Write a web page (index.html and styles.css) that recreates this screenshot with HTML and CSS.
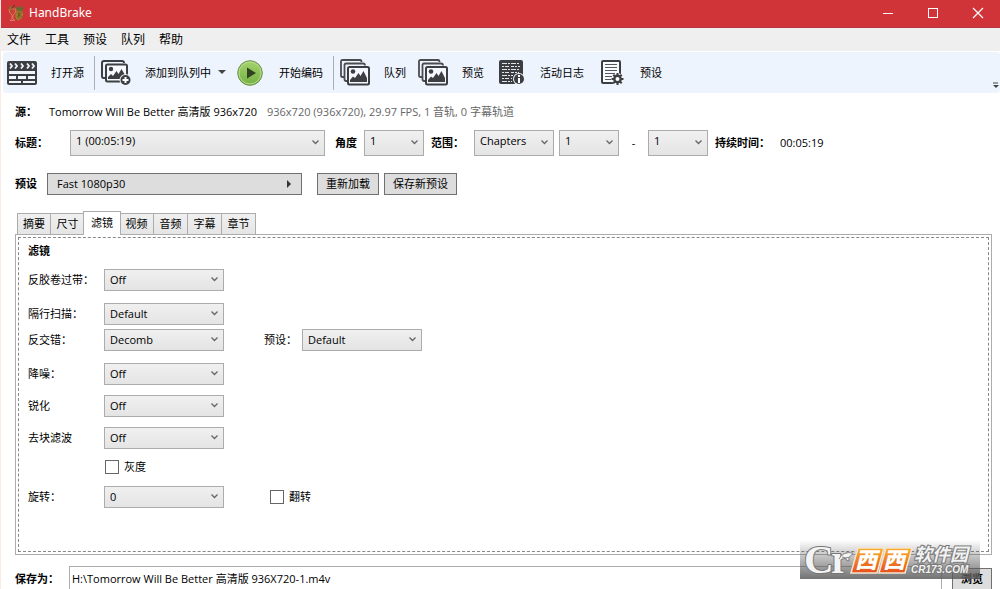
FILE: index.html
```html
<!DOCTYPE html>
<html lang="zh-CN">
<head>
<meta charset="utf-8">
<title>HandBrake</title>
<link rel="stylesheet" href="styles.css">
</head>
<body>
<svg class="defs" aria-hidden="true">
  <defs>
    <linearGradient id="green" x1="0" y1="0" x2="0" y2="1"><stop offset="0" stop-color="#a5d36e"/><stop offset="1" stop-color="#74b043"/></linearGradient>
    <linearGradient id="orange" x1="0" y1="0" x2="0" y2="1"><stop offset="0" stop-color="#f9ae2c"/><stop offset="1" stop-color="#e8501c"/></linearGradient>
    <symbol id="photos" viewBox="0 0 30 27">
      <path d="M4 18H2.500Q1 18 1 16.500V2.500Q1 1 2.500 1H20Q21.500 1 21.500 3" fill="none" stroke="#4a4c50" stroke-width="1.800"/>
      <path d="M7 22H6Q4.500 22 4.500 20V6Q4.500 4.500 6 4.500H23Q25 4.500 25 6.500" fill="none" stroke="#4a4c50" stroke-width="1.800"/>
      <rect x="8" y="8" width="21" height="17.500" rx="1.500" fill="#f5f9ff" stroke="#3c3e42" stroke-width="2"/>
      <circle cx="13" cy="12.500" r="2.300" fill="#3c3e42"/>
      <path d="M10 23V21L13 17.500 15 19 18.500 14 20.500 17 23.500 12 27 19V23Z" fill="#3c3e42"/>
    </symbol>
  </defs>
</svg>
<div class="app">
  <header class="titlebar">
    <svg class="logo" viewBox="0 0 16 16" width="16" height="16" aria-hidden="true">
      <path d="M8 7Q9 4 12 4.500Q16 6 15 11Q13 16 9 15Q6 12 8 7Z" fill="#a07c30"/>
      <path d="M9 5.500L7 1L10.500 3L12 0L13 3L16 1.500L14 6Z" fill="#59702f"/>
      <path d="M9 8L14 12M9 12L14 7M11 6V14" stroke="#6a531c" stroke-width=".8"/>
      <path d="M1 4H8Q8 9 5 10V14L7 15.500H2L4 14V10Q1 9 1 4Z" fill="#c8442f" stroke="#dc9b80" stroke-width=".6"/>
      <circle cx="3" cy="3" r="2" fill="#8b6a2a"/><path d="M4 3L7 0" stroke="#4d3b21"/>
    </svg>
    <h1 class="title">HandBrake</h1>
    <div class="winbtns">
      <button class="winbtn" aria-label="最小化"><svg width="12" height="12"><path d="M1 6.500H11" stroke="#fff"/></svg></button>
      <button class="winbtn" aria-label="最大化"><svg width="12" height="12"><rect x="1.500" y="1.500" width="9" height="9" fill="none" stroke="#fff"/></svg></button>
      <button class="winbtn" aria-label="关闭"><svg width="12" height="12"><path d="M1 1L11 11M11 1L1 11" stroke="#fff" stroke-width="1.200"/></svg></button>
    </div>
  </header>
  <nav class="menu">
    <button>文件</button><button>工具</button><button>预设</button><button>队列</button><button>帮助</button>
  </nav>
  <div class="toolbar">
    <button class="tool open">
      <svg width="30" height="24" viewBox="0 0 30 24" aria-hidden="true">
        <rect width="30" height="24" rx="2" fill="#3c3e42"/>
        <path d="M3 2.500L5 5L3 7.500M8 2.500L10 5L8 7.500M14 2.500L16 5L14 7.500M20 2.500L22 5L20 7.500M25 2.500L27 5L25 7.500" fill="none" stroke="#f0f5fc" stroke-width="1.800"/>
        <path d="M2 10H28V13H2ZM2 15H9V18H2ZM11 15H19V18H11ZM21 15H28V18H21ZM2 20H14V22H2ZM16 20H28V22H16Z" fill="#f0f5fc"/>
      </svg><span>打开源</span></button>
    <span class="sep"></span>
    <button class="tool">
      <svg width="30" height="26" viewBox="0 0 30 26" aria-hidden="true">
        <path d="M4 18H2.500Q1 18 1 16V3Q1 1 3 1H21Q23 1 23 3" fill="none" stroke="#3c3e42" stroke-width="2"/>
        <rect x="5" y="4.500" width="21" height="17" rx="1.500" fill="#f5f9ff" stroke="#3c3e42" stroke-width="2"/>
        <circle cx="10" cy="9" r="2.200" fill="#3c3e42"/>
        <path d="M7 19V17L10 14 12 16 15.500 11 17.500 14 20.500 9 24 15V19Z" fill="#3c3e42"/>
        <circle cx="24.500" cy="20" r="6" fill="#eef4fc"/><circle cx="24.500" cy="20" r="5" fill="#3c3e42"/>
        <path d="M21.500 20H27.500M24.500 17V23" stroke="#fff" stroke-width="2"/>
      </svg><span>添加到队列中</span>
      <svg class="drop" width="8" height="5" aria-hidden="true"><path d="M0 0H8L4 4Z" fill="#444"/></svg></button>
    <button class="tool start">
      <svg width="26" height="26" viewBox="0 0 26 26" aria-hidden="true"><circle cx="13" cy="13" r="12.300" fill="url(#green)" stroke="#6c8f50"/><circle cx="13" cy="13" r="11" fill="none" stroke="#b7dd8b"/><path d="M10 7.500L19 13L10 18.500Z" fill="#30421f"/></svg>
      <span>开始编码</span></button>
    <span class="sep"></span>
    <button class="tool"><svg width="30" height="27" aria-hidden="true"><use href="#photos"/></svg><span>队列</span></button>
    <button class="tool"><svg width="30" height="27" aria-hidden="true"><use href="#photos"/></svg><span>预览</span></button>
    <button class="tool log">
      <svg width="26" height="25" viewBox="0 0 26 25" aria-hidden="true">
        <rect width="24" height="24" rx="2" fill="#3c3e42"/>
        <g fill="none" stroke="#dfe4ea"><path d="M3 3.500H21M3 9.500H21M3 15.500H14M3 21.500H13" stroke-dasharray="5 1 2 1"/><path d="M3 6.500H21M3 12.500H20M3 18.500H13" stroke-dasharray="2 1 4 2 3 1"/></g>
        <circle cx="20" cy="19" r="6" fill="#eef4fc"/><circle cx="20" cy="19" r="5" fill="#3c3e42"/>
        <path d="M20 15V17M20 18V23" stroke="#fff" stroke-width="2"/>
      </svg><span>活动日志</span></button>
    <button class="tool presets">
      <svg width="23" height="25" viewBox="0 0 23 25" aria-hidden="true">
        <rect x="1" y="1" width="18" height="22" rx="1" fill="#f7faff" stroke="#3c3e42" stroke-width="2"/>
        <path d="M4 4.500H16M4 7.500H16M4 10.500H16M4 13.500H14M4 16.500H11M4 19.500H10" stroke="#55575b"/>
        <circle cx="16.500" cy="19" r="6" fill="#eef4fc"/>
        <path d="M16.500 13V25M10.500 19H22.500M12.300 14.800L20.700 23.200M20.700 14.800L12.300 23.200" stroke="#3c3e42" stroke-width="2"/>
        <circle cx="16.500" cy="19" r="3.200" fill="#fff" stroke="#3c3e42" stroke-width="2.400"/>
      </svg><span>预设</span></button>
    <button class="overflow" aria-label="更多"><svg width="6" height="7"><path d="M0 1H5" stroke="#444"/><path d="M0 3H6L3 6Z" fill="#444"/></svg></button>
  </div>
  <main class="content">
    <div class="source"><b>源：</b><span class="name">Tomorrow Will Be Better 高清版 936x720</span><span class="info">936x720 (936x720), 29.97 FPS, 1 音轨, 0 字幕轨道</span></div>
    <div class="range">
      <label class="l-title" for="title">标题：</label><select id="title" class="s-title"><option>1 (00:05:19)</option></select>
      <label class="l-angle" for="angle">角度</label><select id="angle" class="s-num"><option>1</option></select>
      <label class="l-range" for="range">范围：</label><select id="range" class="s-range"><option>Chapters</option></select>
      <select class="s-num s-from" aria-label="起始章节"><option>1</option></select>
      <span class="dash">-</span>
      <select class="s-num" aria-label="结束章节"><option>1</option></select>
      <b class="l-time">持续时间：</b><span>00:05:19</span>
    </div>
    <div class="preset">
      <b>预设</b>
      <button class="btn picker"><span>Fast 1080p30</span><svg width="5" height="8" aria-hidden="true"><path d="M0 0L4 4L0 8Z" fill="#333"/></svg></button>
      <button class="btn">重新加载</button>
      <button class="btn save">保存新预设</button>
    </div>
    <div class="tabs" role="tablist">
      <button class="tab" role="tab">摘要</button><button class="tab" role="tab">尺寸</button><button class="tab active" role="tab" aria-selected="true">滤镜</button><button class="tab" role="tab">视频</button><button class="tab" role="tab">音频</button><button class="tab" role="tab">字幕</button><button class="tab" role="tab">章节</button>
    </div>
    <section class="panel">
      <div class="inner">
        <h2 class="heading">滤镜</h2>
        <div class="row"><label for="f1">反胶卷过带：</label><select id="f1"><option>Off</option></select></div>
        <div class="row tight"><label for="f2">隔行扫描：</label><select id="f2"><option>Default</option></select></div>
        <div class="row"><label for="f3">反交错：</label><select id="f3"><option>Decomb</option></select><label class="second" for="f3p">预设：</label><select id="f3p"><option>Default</option></select></div>
        <div class="row near"><label for="f4">降噪：</label><select id="f4"><option>Off</option></select></div>
        <div class="row near"><label for="f5">锐化</label><select id="f5"><option>Off</option></select></div>
        <div class="row near"><label for="f6">去块滤波</label><select id="f6"><option>Off</option></select></div>
        <div class="row"><label class="check"><input type="checkbox">灰度</label></div>
        <div class="row"><label for="f7">旋转：</label><select id="f7"><option>0</option></select><label class="check flip"><input type="checkbox">翻转</label></div>
      </div>
    </section>
    <div class="saveas"><label for="path">保存为：</label><input id="path" type="text" value="H:\Tomorrow Will Be Better 高清版 936X720-1.m4v"><button class="btn browse">浏览</button></div>
  </main>
  <svg class="mark" width="180" height="39" viewBox="0 0 180 39" role="img" aria-label="西西软件园">
    <g class="mark-serif" stroke="#777" stroke-width="2" fill="#f4f4f4" paint-order="stroke">
      <text x="4" y="33">C</text>
      <text x="31" y="33">r</text>
    </g>
    <path d="M39 19Q43 11 53 13Q49 20 42 17" fill="#f4f4f4" stroke="#888"/>
    <path d="M58 8H84L77 33H51ZM86 8H112L105 33H79Z" fill="url(#orange)" stroke="#f5e5d2" stroke-width="1.500"/>
    <g class="mark-xi" fill="#fff"><text x="55" y="28">西</text><text x="83" y="28">西</text></g>
    <g fill="#f2f2f2" stroke="#777" stroke-width="2" paint-order="stroke">
      <text class="mark-cn" x="114" y="21">软件园</text>
      <text class="mark-en" x="111" y="33">CR173.COM</text>
    </g>
  </svg>
</div>
</body>
</html>
```
FILE: styles.css
```css
* { box-sizing: border-box; }
body { margin: 0; font-family: "Open Sans", "Noto Sans CJK SC", sans-serif; font-size: 11px; line-height: 16px; color: #000; background: #fff; }
button, select, input { font: inherit; color: inherit; margin: 0; }
button { padding: 0; border: 0; background: none; white-space: nowrap; }
.defs { position: absolute; width: 0; height: 0; }
.app { position: relative; display: flex; flex-direction: column; height: 100vh; overflow: hidden; border-left: 1px solid #fbe9e6; }

.titlebar { display: flex; align-items: center; height: 28px; padding: 0 0 2px 8px; margin-left: -1px; background: #d13438; border-bottom: 1px solid #b5383c; color: #fff; }
.title { flex: 1; margin: 0 0 0 5px; font-family: "Noto Sans", sans-serif; font-size: 12px; font-weight: 400; }
.winbtns { display: flex; }
.winbtn { display: grid; place-items: center; width: 45px; height: 24px; }

.menu { display: flex; gap: 14px; height: 24px; padding: 0 6px; background: #efefef; border-bottom: 1px solid #fff; font-size: 12px; line-height: 22px; }

.toolbar { display: flex; align-items: center; height: 41px; margin-left: 2px; padding-left: 4px; background: #edf4fd; border-radius: 3px; }
.tool { display: flex; align-items: center; gap: 14px; margin-right: 12px; }
.tool .drop { margin-left: -7px; }
.open { margin-right: 10px; }
.start { gap: 16px; margin: 0 10px 0 -1px; }
.log { gap: 15px; margin: 0 17px 0 3px; }
.presets { gap: 16px; }
.sep { width: 1px; height: 34px; margin-right: 6px; background: #a9afb8; }
.overflow { align-self: flex-end; margin: 0 1px 0 auto; }

.content { display: flex; flex: 1; flex-direction: column; min-height: 0; padding: 11px 8px 0 14px; }
b, .range label, .saveas label { font-weight: 700; }
.source { display: flex; margin-bottom: 10px; }
.source b { width: 34px; }
.info { margin-left: 10px; color: #666; }

select { appearance: none; width: 120px; height: 22px; padding: 0 18px 0 5px; border: 1px solid #acacac; border-radius: 0; background: url("data:image/svg+xml,%3Csvg xmlns='http://www.w3.org/2000/svg' width='7' height='5'%3E%3Cpath d='M.5 .5L3.500 3.500L6.500 .5' fill='none' stroke='%23666' stroke-width='1.300'/%3E%3C/svg%3E") right 5px top 7px no-repeat, linear-gradient(#f0f0f0, #e4e4e4); }
.range { display: flex; align-items: center; margin-bottom: 17px; }
.range select { height: 26px; padding-bottom: 4px; background-position: right 5px top 9px, 0 0; }
.range .l-title { width: 55px; }
.range .s-title { width: 255px; }
.l-angle { width: 39px; padding-left: 10px; }
.range .s-num { width: 60px; }
.l-range { width: 50px; padding-left: 7px; }
.range .s-range { width: 80px; }
.s-from { margin-left: 5px; }
.dash { width: 29px; text-align: center; }
.l-time { width: 72px; padding-left: 7px; }

.preset { display: flex; align-items: center; margin-bottom: 16px; }
.preset b { width: 32px; }
.btn { height: 22px; padding: 0 8px; border: 1px solid #707070; background: #ddd; }
.picker { display: flex; align-items: center; justify-content: space-between; width: 255px; padding: 0 9px; margin-right: 15px; }
.save { margin-left: 5px; }

.tabs { display: flex; align-items: flex-end; height: 23px; padding-left: 2px; }
.tab { width: 34px; height: 21px; border: 1px solid #acacac; border-bottom: 0; border-left-width: 0; background: linear-gradient(#f0f0f0, #e5e5e5); }
.tab:first-child { border-left-width: 1px; }
.tab.active { position: relative; z-index: 1; width: 38px; height: 24px; margin: 0 -1px -1px -2px; padding-bottom: 2px; border-left-width: 1px; background: #fff; }

.panel { flex: 1; min-height: 0; padding: 2px; border: 1px solid #acacac; }
.inner { height: 100%; padding: 5px 9px; border: 1px dashed #888; }
.heading { margin: 0 0 10px; font-size: 11px; font-weight: 700; }
.row { display: flex; align-items: center; margin-bottom: 12px; }
.row.tight { margin-bottom: 4px; }
.row.near { margin-bottom: 10px; }
.row > label:first-child { width: 76px; }
.row > .second { width: 38px; margin-left: 40px; }
.check { display: flex; align-items: center; gap: 5px; }
.row > .check:first-child { width: auto; margin-left: 77px; line-height: 15px; }
.flip { margin-left: 46px; }
.check input { appearance: none; width: 14px; height: 14px; margin: 0; border: 1px solid #666; background: #fff; }

.saveas { display: flex; align-items: flex-end; margin-top: 11px; }
.saveas label { width: 54px; line-height: 20px; }
.saveas input { flex: 1; min-width: 0; height: 23px; padding: 0 2px; border: 1px solid #acacac; border-bottom: 0; background: #fff; }
.browse { width: 40px; height: 21px; margin-left: 10px; border-bottom: 0; font-weight: 700; }

.mark { position: absolute; right: 20px; bottom: 10px; overflow: visible; background: linear-gradient(rgba(130, 130, 130, 0), rgba(90, 90, 90, .85)); }
.mark-serif { font: 700 41px "Liberation Serif", serif; }
.mark-xi { font: italic 900 22px "Noto Sans CJK SC", sans-serif; }
.mark-cn { font: italic 700 18px "Noto Sans CJK SC", sans-serif; }
.mark-en { font: italic 700 10px "Liberation Sans", sans-serif; }
```
